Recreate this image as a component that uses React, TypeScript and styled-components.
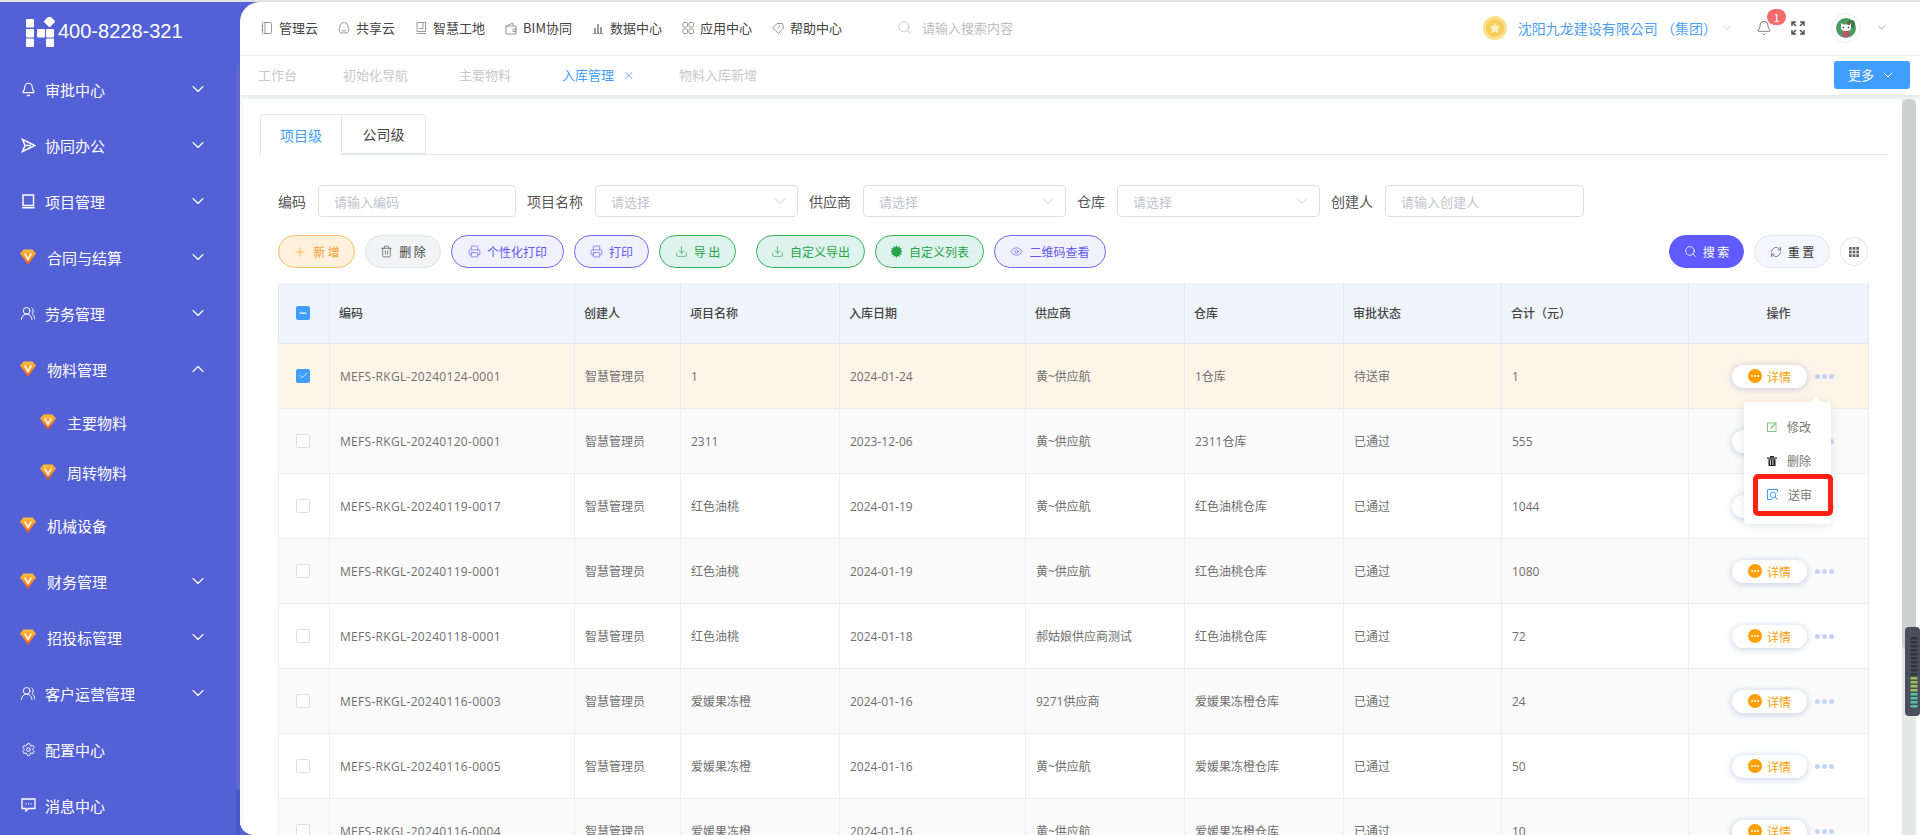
import React from 'react';
import styled, { createGlobalStyle } from 'styled-components';
import { Bell, ChevronDown, ChevronUp, Check, Minus, Download, Eye, Plus, Printer, RefreshCw, Search, Settings, Trash2, UsersRound, Cog } from 'lucide-react';

const GlobalStyle = createGlobalStyle`
  * { box-sizing: border-box; }
  html, body { margin: 0; padding: 0; background: #fff; }
  body { font-family: "Noto Sans CJK SC", "Noto Sans", sans-serif; font-size: 12px; }
`;

const Page = styled.div`
  width: 1920px;
  height: 835px;
  overflow: hidden;
  position: relative;
  display: flex;
  flex-direction: column;
  background: #5460d5;
  border-top: 2px solid #e2e2e2;
`;

const Shell = styled.div`
  flex: 1;
  display: flex;
  min-height: 0;
`;

/* sidebar */
const Sidebar = styled.aside`
  width: 240px;
  flex: none;
  position: relative;
  background: #5460d5;
  color: #fff;
`;

const SideRail = styled.div`
  position: absolute;
  top: 63px;
  right: 0;
  bottom: 0;
  width: 4px;
  background: #4a55c6;
`;

const SideRailThumb = styled.div`
  height: 726px;
  background: #6069d2;
  border-radius: 0 0 0 4px;
`;

const Logo = styled.div`
  height: 59px;
  display: flex;
  align-items: center;
  padding-left: 25px;
  gap: 3px;
  font-family: "Liberation Sans", sans-serif;
  font-size: 20px;
`;

const MenuRow = styled.div<{ $sub?: boolean }>`
  height: ${p => (p.$sub ? 50 : 56)}px;
  display: flex;
  align-items: center;
  padding-left: ${p => (p.$sub ? 40 : 20)}px;
  padding-right: 32px;
  font-size: 15px;
  color: #fff;
`;

const MenuIcon = styled.span`
  width: 16px;
  height: 16px;
  flex: none;
  display: flex;
  align-items: center;
  justify-content: center;
`;

const MenuLabel = styled.span<{ $gem?: boolean }>`
  margin-left: ${p => (p.$gem ? 11 : 9)}px;
  flex: 1;
`;

/* main panel */
const Main = styled.main`
  flex: 1;
  min-width: 0;
  display: flex;
  flex-direction: column;
  background: #fff;
  border-radius: 20px 0 0 14px;
  overflow: hidden;
`;

const TopBar = styled.header`
  height: 54px;
  flex: none;
  display: flex;
  align-items: center;
  padding: 0 32px 2px 21px;
  border-bottom: 1px solid #f0f0f0;
`;

const NavItem = styled.div`
  display: flex;
  align-items: center;
  gap: 6px;
  margin-right: 20px;
  font-size: 13px;
  color: #444;
  white-space: nowrap;
`;

const NavIconBox = styled.svg`
  width: 12px;
  height: 14px;
  flex: none;
  fill: none;
  stroke: #999;
  stroke-width: 1;
`;

const TopSearch = styled.div`
  display: flex;
  align-items: center;
  gap: 10px;
  margin-left: 35px;
  font-size: 13px;
  color: #bdbdbd;
`;

const TopRight = styled.div`
  margin-left: auto;
  display: flex;
  align-items: center;
`;

const CompanyName = styled.span`
  margin-left: 11px;
  font-family: "Noto Sans CJK TC", "Noto Sans CJK SC", sans-serif;
  font-size: 14px;
  color: #4d9ff5;
  white-space: pre;
`;

const BellBox = styled.div`
  position: relative;
  margin-left: 23px;
  width: 16px;
  height: 16px;
  display: flex;
  align-items: center;
  justify-content: center;
`;

const Badge = styled.span`
  position: absolute;
  left: 11px;
  top: -11px;
  width: 19px;
  height: 16px;
  border-radius: 8px;
  background: #f56c6c;
  color: #fff;
  font-size: 11px;
  line-height: 16px;
  text-align: center;
`;

const FullBox = styled.div`
  margin-left: 19px;
  width: 14px;
  height: 14px;
  display: flex;
`;

const AvatarRing = styled.div`
  margin-left: 26px;
  margin-right: 14px;
  width: 30px;
  height: 30px;
  border-radius: 50%;
  border: 1px solid #eee;
  display: flex;
  align-items: center;
  justify-content: center;
`;

const TabsBar = styled.nav`
  height: 39px;
  flex: none;
  display: flex;
  align-items: center;
  padding: 0 10px 2px 18px;
  font-size: 13px;
  background: #fff;
  box-shadow: 0 1px 4px rgba(0, 0, 0, 0.08);
  position: relative;
`;

const PageTab = styled.span<{ $active?: boolean; $left?: number }>`
  margin-left: ${p => p.$left ?? 0}px;
  color: ${p => (p.$active ? '#409eff' : '#c8c8c8')};
  white-space: nowrap;
`;

const TabClose = styled.span`
  margin-left: 9px;
  color: #6aaef5;
  font-size: 11px;
`;

const MoreButton = styled.button`
  margin-left: auto;
  width: 76px;
  height: 28px;
  border: none;
  border-radius: 3px;
  background: #409eff;
  color: #fff;
  font-family: inherit;
  font-size: 13px;
  display: flex;
  align-items: center;
  justify-content: center;
  gap: 6px;
  padding: 0;
`;

const Body = styled.div`
  flex: 1;
  min-height: 0;
  display: flex;
  border-top: 4px solid #f3f4f6;
  border-left: 4px solid #f7f9fe;
`;

const Content = styled.section`
  flex: 1;
  min-width: 0;
  padding: 15px 15px 0 16px;
`;

const LevelTabs = styled.div`
  height: 41px;
  display: flex;
  border-bottom: 1px solid #e4e7ed;
`;

const LevelTab = styled.div<{ $active?: boolean }>`
  width: ${p => (p.$active ? 82 : 84)}px;
  height: ${p => (p.$active ? 41 : 40)}px;
  display: flex;
  align-items: center;
  justify-content: center;
  font-size: 14px;
  background: #fff;
  border: 1px solid #e4e7ed;
  border-bottom: ${p => (p.$active ? 'none' : '1px solid #e4e7ed')};
  border-left: ${p => (p.$active ? '1px solid #e4e7ed' : 'none')};
  border-radius: ${p => (p.$active ? '4px 0 0 0' : '0 4px 0 0')};
  color: ${p => (p.$active ? '#409eff' : '#444')};
`;

const Inner = styled.div`
  padding-left: 18px;
`;

const FilterRow = styled.div`
  margin-top: 30px;
  display: flex;
  align-items: center;
  gap: 11px;
`;

const Field = styled.div`
  display: flex;
  align-items: center;
  gap: 12px;
`;

const FieldLabel = styled.label`
  font-size: 14px;
  color: #555;
  white-space: nowrap;
`;

const Control = styled.div<{ $w: number }>`
  width: ${p => p.$w}px;
  height: 32px;
  border: 1px solid #dcdfe6;
  border-radius: 4px;
  background: #fff;
  padding: 0 7px 0 15px;
  display: flex;
  align-items: center;
  justify-content: space-between;
  font-size: 13px;
  color: #c0c4cc;
`;

const ToolRow = styled.div`
  margin-top: 18px;
  height: 33px;
  width: 1590px;
  display: flex;
  align-items: center;
  gap: 10px;
`;

const tones = {
  orange: { bg: '#fff1dc', line: '#f6bd6a', fg: '#f0a030' },
  gray: { bg: '#f2f3f5', line: '#dcdfe6', fg: '#444' },
  purple: { bg: '#f0f1fd', line: '#6f68f5', fg: '#625af0' },
  green: { bg: '#dff3ee', line: '#35b04f', fg: '#27a345' },
  solid: { bg: '#5f5bff', line: '#5f5bff', fg: '#fff' },
  light: { bg: '#f4f8fe', line: '#dfe3ea', fg: '#333' },
};

const ToolButton = styled.button<{ $tone: keyof typeof tones; $w: number; $gapLeft?: number }>`
  width: ${p => p.$w}px;
  height: 33px;
  flex: none;
  margin-left: ${p => p.$gapLeft ?? 0}px;
  border-radius: 17px;
  border: 1px solid ${p => tones[p.$tone].line};
  background: ${p => tones[p.$tone].bg};
  color: ${p => tones[p.$tone].fg};
  font-family: inherit;
  font-size: 12px;
  padding: 0;
  display: flex;
  align-items: center;
  justify-content: center;
  gap: 6px;
  white-space: pre;
`;

const ToolSpacer = styled.div`
  flex: 1;
`;

const GridButton = styled.button`
  width: 28px;
  height: 29px;
  flex: none;
  border-radius: 50%;
  border: 1px solid #e4e7ed;
  background: #fff;
  padding: 0;
  display: flex;
  align-items: center;
  justify-content: center;
`;

const Table = styled.table`
  margin-top: 15px;
  width: 1590px;
  table-layout: fixed;
  border-collapse: collapse;
`;

const Th = styled.th<{ $center?: boolean }>`
  height: 60px;
  padding: 0 9px;
  background: #eef3fc;
  border: 1px solid #e4e8f0;
  border-top: none;
  font-size: 12px;
  font-weight: 500;
  color: #444;
  text-align: ${p => (p.$center ? 'center' : 'left')};
`;

const Tr = styled.tr<{ $selected?: boolean; $odd?: boolean }>`
  background: ${p => (p.$selected ? '#fff4e8' : p.$odd ? '#fafafa' : '#fff')};
`;

const Td = styled.td`
  height: 65px;
  padding: 0 10px;
  border: 1px solid #ebeef6;
  font-size: 12px;
  color: #6f6f6f;
  white-space: nowrap;
  position: relative;
`;

const CellText = styled.span<{ $code?: boolean }>`
  font-family: "Open Sans", "Noto Sans CJK SC", sans-serif;
  font-size: 12px;
  letter-spacing: ${p => (p.$code ? '0.3px' : '0')};
`;

const CheckCell = styled.div`
  display: flex;
  justify-content: center;
  padding-right: 2px;
`;

const CheckBox = styled.span<{ $on?: boolean }>`
  width: 14px;
  height: 14px;
  border-radius: 2px;
  border: 1px solid ${p => (p.$on ? '#409eff' : '#dcdfe6')};
  background: ${p => (p.$on ? '#409eff' : '#fff')};
  display: flex;
  align-items: center;
  justify-content: center;
`;

const ActionCell = styled.div`
  display: flex;
  align-items: center;
  padding: 1px 0 0 33px;
`;

const DetailPill = styled.div`
  width: 75px;
  height: 23px;
  border-radius: 12px;
  background: #fff;
  box-shadow: 0 1px 7px rgba(120, 145, 200, 0.45);
  display: flex;
  align-items: center;
  padding-left: 16px;
  gap: 5px;
  color: #ff9f0a;
  font-size: 12px;
`;

const DotIcon = styled.span`
  width: 14px;
  height: 14px;
  border-radius: 50%;
  background: #ff9f00;
  display: flex;
  align-items: center;
  justify-content: center;
  gap: 1px;
`;

const WhiteDot = styled.i`
  width: 2px;
  height: 2px;
  border-radius: 50%;
  background: #fff;
`;

const MoreDots = styled.div`
  margin-left: 8px;
  display: flex;
  gap: 2px;
`;

const BlueDot = styled.i`
  width: 5px;
  height: 5px;
  border-radius: 50%;
  background: #c5d3f7;
`;

const Dropdown = styled.div`
  position: absolute;
  left: 55px;
  top: 58px;
  width: 87px;
  height: 122px;
  padding-top: 8px;
  background: #fff;
  border-radius: 3px;
  box-shadow: 0 2px 12px rgba(0, 0, 0, 0.1);
  z-index: 5;
  &::before {
    content: '';
    position: absolute;
    top: -5px;
    left: 67px;
    border-left: 5px solid transparent;
    border-right: 5px solid transparent;
    border-bottom: 5px solid #fff;
  }
`;

const DropItem = styled.div`
  height: 34px;
  display: flex;
  align-items: center;
  padding-left: 23px;
  gap: 10px;
  font-size: 12px;
  color: #777;
`;

const RedMark = styled.div`
  position: absolute;
  left: 9px;
  top: 72px;
  width: 80px;
  height: 42px;
  border: 5px solid #ff2010;
  border-radius: 5px;
`;

const ScrollTrack = styled.div`
  width: 14px;
  margin-right: 4px;
  flex: none;
  background: #e6e7e7;
`;

const ScrollThumb = styled.div`
  height: 552px;
  background: #cdcecf;
  border-radius: 7px;
`;

const Meter = styled.svg`
  position: absolute;
  right: 0;
  top: 625px;
  width: 15px;
  height: 89px;
`;

const Gem = ({ size = 16 }: { size?: number }) => (
  <svg width={size} height={size} viewBox="0 0 16 16">
    <defs>
      <linearGradient id="gem" x1="0" y1="0" x2="0" y2="1">
        <stop offset="0" stopColor="#ffc23a" />
        <stop offset="0.55" stopColor="#fb8a24" />
        <stop offset="1" stopColor="#f24a1c" />
      </linearGradient>
    </defs>
    <path d="M3.500 .5h9L16 4.500 8 16 0 4.500z" fill="url(#gem)" />
    <path d="M4.800 4.500L8 10.500l3.200-6" fill="none" stroke="#fff6dc" strokeWidth="1.800" />
  </svg>
);

const LogoMark = () => (
  <svg width="30" height="30" viewBox="0 0 30 30" fill="#fff">
    <rect x="1" y="2" width="8" height="8.500" rx="1" />
    <rect x="1" y="12" width="8" height="8.500" rx="1" />
    <rect x="1" y="21.500" width="8" height="8.500" rx="1" />
    <rect x="12" y="12" width="8" height="8.500" rx="1" />
    <rect x="21" y="12" width="8" height="8.500" rx="1" />
    <rect x="21" y="21.500" width="8" height="8.500" rx="1" />
    <path d="M24.500 -1.500l6 6-6 6-6-6z" />
  </svg>
);

const PlaneIcon = () => (
  <svg width="15" height="15" viewBox="0 0 15 15" fill="none" stroke="#fff" strokeWidth="1.500">
    <path d="M1.500 1.500L14 7.500 1.500 13.500 4 7.500zM4 7.500h6" />
  </svg>
);

const BookIcon = () => (
  <svg width="14" height="15" viewBox="0 0 14 15" fill="none" stroke="#fff" strokeWidth="1.500">
    <path d="M2 1h10.500v10.500H2zM1 13.800h12.500M2 1v11" />
  </svg>
);

const ChatIcon = () => (
  <svg width="15" height="14" viewBox="0 0 15 14" fill="none" stroke="#fff" strokeWidth="1.300">
    <path d="M1 1h13v9.500H7.500L5 13v-2.500H1z" />
    <path d="M4.500 5.800h1M7 5.800h1M9.500 5.800h1" />
  </svg>
);

const GridDots = () => (
  <svg width="10" height="10" viewBox="0 0 11 11" fill="#666">
    {[0, 4, 8].flatMap(x => [0, 4, 8].map(y => <rect key={`${x}-${y}`} x={x} y={y} width="3" height="3" />))}
  </svg>
);

const navPaths: Record<string, React.ReactNode> = {
  manage: <><rect x="1.500" y="1.500" width="9" height="11" rx="1" /><path d="M4 1.500v11M.5 5h2M.5 9h2" /></>,
  share: <><path d="M6 1.500c2.500 0 4 2 4 4.500 1.500 1.500 1 5.500-1 6H3c-2-.5-2.500-4.500-1-6 0-2.500 1.500-4.500 4-4.500z" /><path d="M3.500 9c1.500 1.500 3.500 1.500 5 0" /></>,
  site: <><path d="M2 1.500h8.500v9H2zM1.500 12.500h9.500" /><path d="M8 1.500v6H4" /></>,
  bim: <><path d="M1 5l7-3v3M1 5h10v8H1zM8 8h3v2.500H8z" /></>,
  data: <><path d="M.5 12.500h11" /><path d="M3 12V7M6 12V3M9 12V6" strokeWidth="2" /></>,
  apps: <><rect x="1" y="1.500" width="4.500" height="4.500" rx="1" /><rect x="7" y="1.500" width="4.500" height="4.500" rx="1" /><rect x="1" y="8" width="4.500" height="4.500" rx="1" /><rect x="7" y="8" width="4.500" height="4.500" rx="1" /></>,
  help: <><path d="M.5 7L5 2.500h5.500L11.500 7 6.500 12.500z" /><path d="M5.500 7l2.500-2" /></>,
};

const NavIcon = ({ name }: { name: string }) => (
  <NavIconBox viewBox="0 0 12 14">{navPaths[name]}</NavIconBox>
);

const Coin = () => (
  <svg width="24" height="24" viewBox="0 0 24 24">
    <circle cx="12" cy="12" r="12" fill="#fde08a" />
    <circle cx="12" cy="12" r="9" fill="#f7cb5c" />
    <path d="M12 6.500l1.700 3.600 3.900.5-2.900 2.700.8 3.900-3.500-2-3.500 2 .8-3.900-2.900-2.700 3.900-.5z" fill="#fff0c4" />
  </svg>
);

const CatAvatar = () => (
  <svg width="20" height="20" viewBox="0 0 20 20">
    <circle cx="10" cy="10" r="10" fill="#4b9a5e" />
    <circle cx="15" cy="6" r="4" fill="#2f7f46" />
    <rect x="6.500" y="12" width="7" height="7" fill="#b8566e" />
    <path d="M5 5l2 1.500h6L15 5v5c0 2-2 3-5 3s-5-1-5-3z" fill="#fff" />
    <circle cx="7.500" cy="9.500" r=".8" fill="#222" />
    <circle cx="12.500" cy="9.500" r=".8" fill="#222" />
    <circle cx="13" cy="5.500" r="1.500" fill="#c33" />
  </svg>
);

const FullIcon = () => (
  <svg width="14" height="14" viewBox="0 0 14 14" fill="none" stroke="#555" strokeWidth="1.500">
    <path d="M1 5V1h4M9 1h4v4M1 9v4h4M13 9v4H9M1.500 1.500L5 5M12.500 1.500L9 5M1.500 12.500L5 9M12.500 12.500L9 9" />
  </svg>
);

const EditIcon = () => (
  <svg width="10" height="10" viewBox="0 0 10 10" fill="none">
    <rect x=".5" y="1" width="8.500" height="8.500" stroke="#7fc47f" />
    <path d="M3 7l1-2 4-4 1 1-4 4z" fill="#7fc47f" />
  </svg>
);

const BinIcon = () => (
  <svg width="10" height="10" viewBox="0 0 10 10" fill="#222">
    <rect x="0" y="1.500" width="10" height="1.200" />
    <rect x="3" y="0" width="4" height="1.500" />
    <path d="M1.500 3.200h7V10h-7zM3 4v5h.8V4zM5.500 4v5h.8V4z" fillRule="evenodd" />
  </svg>
);

const ReviewIcon = () => (
  <svg width="11" height="11" viewBox="0 0 11 11" fill="none" stroke="#409eff">
    <path d="M10.500 3V.5H.5v10H5" />
    <circle cx="6" cy="6" r="2.800" />
    <path d="M8 8l2.500 2.500" />
  </svg>
);

const menu: { label: string; icon: React.ReactNode; gem?: boolean; open?: boolean; arrow?: boolean }[] = [
  { label: '审批中心', icon: <Bell size={15} strokeWidth={1.800} />, arrow: true },
  { label: '协同办公', icon: <PlaneIcon />, arrow: true },
  { label: '项目管理', icon: <BookIcon />, arrow: true },
  { label: '合同与结算', icon: <Gem />, gem: true, arrow: true },
  { label: '劳务管理', icon: <UsersRound size={17} strokeWidth={1.500} />, arrow: true },
  { label: '物料管理', icon: <Gem />, gem: true, arrow: true, open: true },
];

const menuAfter: typeof menu = [
  { label: '机械设备', icon: <Gem />, gem: true },
  { label: '财务管理', icon: <Gem />, gem: true, arrow: true },
  { label: '招投标管理', icon: <Gem />, gem: true, arrow: true },
  { label: '客户运营管理', icon: <UsersRound size={17} strokeWidth={1.500} />, arrow: true },
  { label: '配置中心', icon: <Settings size={15} strokeWidth={1.600} /> },
  { label: '消息中心', icon: <ChatIcon /> },
];

const MenuEntry = ({ item }: { item: (typeof menu)[number] }) => (
  <MenuRow>
    <MenuIcon>{item.icon}</MenuIcon>
    <MenuLabel $gem={item.gem}>{item.label}</MenuLabel>
    {item.arrow && (item.open ? <ChevronUp size={20} strokeWidth={1.400} /> : <ChevronDown size={20} strokeWidth={1.400} />)}
  </MenuRow>
);

const topNav = [
  ['manage', '管理云'],
  ['share', '共享云'],
  ['site', '智慧工地'],
  ['bim', 'BIM协同'],
  ['data', '数据中心'],
  ['apps', '应用中心'],
  ['help', '帮助中心'],
];

const colWidths = [51, 245, 106, 159, 186, 159, 159, 158, 187, 180];
const headers = ['编码', '创建人', '项目名称', '入库日期', '供应商', '仓库', '审批状态', '合计（元）'];

const rows = [
  ['MEFS-RKGL-20240124-0001', '智慧管理员', '1', '2024-01-24', '黄~供应航', '1仓库', '待送审', '1'],
  ['MEFS-RKGL-20240120-0001', '智慧管理员', '2311', '2023-12-06', '黄~供应航', '2311仓库', '已通过', '555'],
  ['MEFS-RKGL-20240119-0017', '智慧管理员', '红色油桃', '2024-01-19', '黄~供应航', '红色油桃仓库', '已通过', '1044'],
  ['MEFS-RKGL-20240119-0001', '智慧管理员', '红色油桃', '2024-01-19', '黄~供应航', '红色油桃仓库', '已通过', '1080'],
  ['MEFS-RKGL-20240118-0001', '智慧管理员', '红色油桃', '2024-01-18', '郝姑娘供应商测试', '红色油桃仓库', '已通过', '72'],
  ['MEFS-RKGL-20240116-0003', '智慧管理员', '爱媛果冻橙', '2024-01-16', '9271供应商', '爱媛果冻橙仓库', '已通过', '24'],
  ['MEFS-RKGL-20240116-0005', '智慧管理员', '爱媛果冻橙', '2024-01-16', '黄~供应航', '爱媛果冻橙仓库', '已通过', '50'],
  ['MEFS-RKGL-20240116-0004', '智慧管理员', '爱媛果冻橙', '2024-01-16', '黄~供应航', '爱媛果冻橙仓库', '已通过', '10'],
];

const App: React.FC = () => (
  <Page>
    <GlobalStyle />
    <Shell>
      <Sidebar>
        <Logo>
          <LogoMark />
          400-8228-321
        </Logo>
        {menu.map(item => <MenuEntry key={item.label} item={item} />)}
        <MenuRow $sub><MenuIcon><Gem /></MenuIcon><MenuLabel $gem>主要物料</MenuLabel></MenuRow>
        <MenuRow $sub><MenuIcon><Gem /></MenuIcon><MenuLabel $gem>周转物料</MenuLabel></MenuRow>
        {menuAfter.map(item => <MenuEntry key={item.label} item={item} />)}
        <SideRail><SideRailThumb /></SideRail>
      </Sidebar>

      <Main>
        <TopBar>
          {topNav.map(([icon, label]) => (
            <NavItem key={label}><NavIcon name={icon} />{label}</NavItem>
          ))}
          <TopSearch><Search size={15} strokeWidth={1.200} color="#bbb" />请输入搜索内容</TopSearch>
          <TopRight>
            <Coin />
            <CompanyName>沈阳九龙建设有限公司 （集团）</CompanyName>
            <ChevronDown size={12} strokeWidth={1.200} color="#7fb6f2" style={{ marginLeft: 4 }} />
            <BellBox>
              <Bell size={16} strokeWidth={1} color="#444" />
              <Badge>1</Badge>
            </BellBox>
            <FullBox><FullIcon /></FullBox>
            <AvatarRing><CatAvatar /></AvatarRing>
            <ChevronDown size={13} strokeWidth={1.200} color="#777" />
          </TopRight>
        </TopBar>

        <TabsBar>
          <PageTab>工作台</PageTab>
          <PageTab $left={46}>初始化导航</PageTab>
          <PageTab $left={51}>主要物料</PageTab>
          <PageTab $left={51} $active>入库管理</PageTab>
          <TabClose>×</TabClose>
          <PageTab $left={45}>物料入库新增</PageTab>
          <MoreButton>更多<ChevronDown size={16} strokeWidth={1.500} /></MoreButton>
        </TabsBar>

        <Body>
          <Content>
            <LevelTabs>
              <LevelTab $active>项目级</LevelTab>
              <LevelTab>公司级</LevelTab>
            </LevelTabs>
            <Inner>
              <FilterRow>
                <Field><FieldLabel>编码</FieldLabel><Control $w={198}>请输入编码</Control></Field>
                <Field><FieldLabel>项目名称</FieldLabel><Control $w={203}>请选择<ChevronDown size={20} strokeWidth={1} /></Control></Field>
                <Field><FieldLabel>供应商</FieldLabel><Control $w={203}>请选择<ChevronDown size={20} strokeWidth={1} /></Control></Field>
                <Field><FieldLabel>仓库</FieldLabel><Control $w={203}>请选择<ChevronDown size={20} strokeWidth={1} /></Control></Field>
                <Field><FieldLabel>创建人</FieldLabel><Control $w={199}>请输入创建人</Control></Field>
              </FilterRow>

              <ToolRow>
                <ToolButton $tone="orange" $w={77}><Plus size={14} strokeWidth={1.200} />新 增</ToolButton>
                <ToolButton $tone="gray" $w={76}><Trash2 size={13} strokeWidth={1.200} />删 除</ToolButton>
                <ToolButton $tone="purple" $w={113}><Printer size={13} strokeWidth={1.200} />个性化打印</ToolButton>
                <ToolButton $tone="purple" $w={75}><Printer size={13} strokeWidth={1.200} />打印</ToolButton>
                <ToolButton $tone="green" $w={77}><Download size={13} strokeWidth={1.200} />导 出</ToolButton>
                <ToolButton $tone="green" $w={109} $gapLeft={10}><Download size={13} strokeWidth={1.200} />自定义导出</ToolButton>
                <ToolButton $tone="green" $w={109}><Cog size={13} strokeWidth={2} fill="currentColor" />自定义列表</ToolButton>
                <ToolButton $tone="purple" $w={112}><Eye size={13} strokeWidth={1.200} />二维码查看</ToolButton>
                <ToolSpacer />
                <ToolButton $tone="solid" $w={75}><Search size={13} strokeWidth={1.500} />搜 索</ToolButton>
                <ToolButton $tone="light" $w={76}><RefreshCw size={12} strokeWidth={1.200} />重 置</ToolButton>
                <GridButton><GridDots /></GridButton>
              </ToolRow>

              <Table>
                <colgroup>
                  {colWidths.map((w, i) => <col key={i} width={w} />)}
                </colgroup>
                <thead>
                  <tr>
                    <Th><CheckCell><CheckBox $on><Minus size={10} color="#fff" strokeWidth={3} /></CheckBox></CheckCell></Th>
                    {headers.map(h => <Th key={h}>{h}</Th>)}
                    <Th $center>操作</Th>
                  </tr>
                </thead>
                <tbody>
                  {rows.map((row, i) => (
                    <Tr key={row[0]} $selected={i === 0} $odd={i % 2 === 1}>
                      <Td>
                        <CheckCell>
                          <CheckBox $on={i === 0}>{i === 0 && <Check size={11} color="#fff" strokeWidth={1.500} />}</CheckBox>
                        </CheckCell>
                      </Td>
                      {row.map((cell, j) => <Td key={j}><CellText $code={j === 0}>{cell}</CellText></Td>)}
                      <Td>
                        <ActionCell>
                          <DetailPill>
                            <DotIcon><WhiteDot /><WhiteDot /><WhiteDot /></DotIcon>
                            详情
                          </DetailPill>
                          <MoreDots><BlueDot /><BlueDot /><BlueDot /></MoreDots>
                        </ActionCell>
                        {i === 0 && (
                          <Dropdown>
                            <DropItem><EditIcon />修改</DropItem>
                            <DropItem><BinIcon />删除</DropItem>
                            <DropItem><ReviewIcon />送审</DropItem>
                            <RedMark />
                          </Dropdown>
                        )}
                      </Td>
                    </Tr>
                  ))}
                </tbody>
              </Table>
            </Inner>
          </Content>
          <ScrollTrack><ScrollThumb /></ScrollTrack>
        </Body>
      </Main>
    </Shell>
    <Meter viewBox="0 0 15 89">
      <rect x="0" y="0" width="15" height="89" rx="4" fill="#4b4e5c" />
      {Array.from({ length: 18 }, (_, i) => (
        <rect key={i} x="5.500" y={10 + i * 4} width="7" height="2.500" fill={i < 10 ? '#33363f' : i < 14 ? '#9dbf5a' : '#4fc3a1'} />
      ))}
    </Meter>
  </Page>
);

export default App;
